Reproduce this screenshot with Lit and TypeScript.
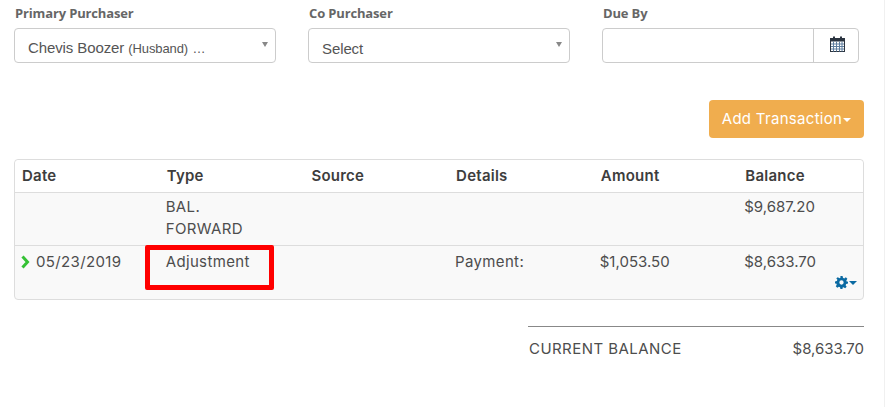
import { LitElement, html, css, svg } from "lit";
import { customElement } from "lit/decorators.js";

const gear = svg`<svg class="gear" width="13" height="13" viewBox="0 0 24 24"><path fill="#0b6aa2" fill-rule="evenodd" d="M10 0h4l.7 3.4 2.300 1 3-1.900 2.800 2.800-1.900 3 1 2.300L24 10v4l-3.400.7-1 2.300 1.900 3-2.800 2.800-3-1.900-2 .9L14 24h-4l-.7-3.200-2.100-.9-3 1.900-2.800-2.800 1.900-3-1-2.300L0 14v-4l3.400-.7 1-2.300-2-3L5.200 2.200l3 1.900 1.900-.8zM12 8a4 4 0 1 0 0 8 4 4 0 0 0 0-8z"/></svg>`;

const calendar = svg`<svg width="15" height="16" viewBox="0 0 15 16"><rect x="0.500" y="2.500" width="14" height="13" fill="#fff" stroke="#2b3440"/><rect x="0" y="2" width="15" height="3.500" fill="#2b3440"/><path d="M3 0.500h2v3h-2zM10 0.500h2v3h-2z" fill="#2b3440"/><path d="M3.500 5.500v10M6.500 5.500v10M9.500 5.500v10M12 5.500v10M1 8h13M1 10.500h13M1 13h13" stroke="#5f7f9f" stroke-width="1" fill="none"/></svg>`;

@customElement("app-root")
export class AppRoot extends LitElement {
  static styles = css`
    :host { display: block; position: relative; width: 888px; height: 407px; background: #fff; overflow: hidden;
      font-family: "Inter", "Open Sans", sans-serif; color: #4a4a4a; }
    .page { width: 885px; height: 407px; box-sizing: border-box; border-right: 1px solid #f0f0f0; padding: 4px 0 0 14px; }
    .fields { display: flex; gap: 32px; }
    .field { width: 262px; }
    .field.due { width: 257px; }
    .label { font: 700 13px/18px "Open Sans", sans-serif; color: #666; padding-left: 1px; height: 24px; letter-spacing: -0.15px; }
    .select { height: 35px; box-sizing: border-box; border: 1px solid #ccc; border-radius: 4px; background: #fff; display: flex; align-items: center; padding: 6px 14px 0 13px; position: relative;
      font: 15px/20px "Liberation Sans", Arial, sans-serif; letter-spacing: -0.1px; color: #555; }
    .select small { font-size: 13px; margin-left: 4px; word-spacing: 1px; letter-spacing: -0.1px; }
    .caret { position: absolute; right: 7px; top: 13px; width: 0; height: 0; border-left: 3.500px solid transparent; border-right: 3.500px solid transparent; border-top: 5px solid #888; }
    .group { display: flex; height: 35px; box-sizing: border-box; border: 1px solid #ccc; border-radius: 4px; }
    .group .input { flex: 1; border-right: 1px solid #ccc; }
    .group .addon { width: 44px; display: flex; align-items: center; justify-content: center; padding: 0 0 3px 3px; box-sizing: border-box; }
    .actions { display: flex; justify-content: flex-end; width: 850px; margin-top: 37px; }
    .btn { width: 155px; height: 38px; background: #f0ad4e; border-radius: 4px; color: #fff; box-sizing: border-box; display: flex; align-items: center; justify-content: center; gap: 1px;
      font: 15px/20px "Inter", sans-serif; letter-spacing: 0.3px; }
    .btn i { width: 0; height: 0; border-left: 4px solid transparent; border-right: 4px solid transparent; border-top: 4px solid #fff; margin-top: 2px; }
    .table { width: 850px; box-sizing: border-box; margin-top: 21px; border: 1px solid #ddd; border-radius: 4px; height: 141px; background: #f9f9f9; position: relative; }
    .row { display: grid; grid-template-columns: 144.700px 144.700px 144.700px 144.700px 144.500px 1fr; font: 15px/22px "Inter", sans-serif; letter-spacing: 0.35px; color: #4d4d4d; }
    .row > div { padding-left: 7px; }
    .row > .num { letter-spacing: 0; }
    .head { background: #fff; height: 32px; border-bottom: 1px solid #ddd; border-radius: 4px 4px 0 0; font-weight: 600; color: #3d3d3d; line-height: 31px; letter-spacing: 0.25px; }
    .r1 { height: 52px; border-bottom: 1px solid #ddd; }
    .r1 > div { padding: 3px 0 0 6px; }
    .r2 { height: 53px; position: relative; }
    .r2 > div { padding: 5px 0 0 6px; }
    .r2 .date { display: flex; align-items: flex-start; gap: 6px; padding-left: 5px; }
    .date svg { margin-top: 4px; flex: none; }
    .r2 .menu { position: absolute; right: 6px; bottom: 10px; display: flex; align-items: center; gap: 1px; padding: 0; }
    .menu i { width: 0; height: 0; border-left: 4px solid transparent; border-right: 4px solid transparent; border-top: 4px solid #0b6aa2; }
    .mark { position: absolute; left: 145px; top: 245px; width: 129px; height: 45px; box-sizing: border-box; border: 5px solid #f00; border-radius: 2px; }
    .total { width: 336px; margin: 26px 0 0 514px; box-sizing: border-box; border-top: 1px solid #888; display: flex; justify-content: space-between; padding: 12px 0 0 1px; font: 15px/20px "Inter", sans-serif; letter-spacing: 0.45px; color: #4d4d4d; }
    .total .num { letter-spacing: -0.05px; }
  `;

  render() {
    return html`
      <div class="page">
        <div class="fields">
          <div class="field">
            <div class="label">Primary Purchaser</div>
            <div class="select"><span>Chevis Boozer<small>(Husband) …</small></span><span class="caret"></span></div>
          </div>
          <div class="field">
            <div class="label">Co Purchaser</div>
            <div class="select"><span>Select</span><span class="caret"></span></div>
          </div>
          <div class="field due">
            <div class="label">Due By</div>
            <div class="group"><div class="input"></div><div class="addon">${calendar}</div></div>
          </div>
        </div>
        <div class="actions"><div class="btn">Add Transaction<i></i></div></div>
        <div class="table">
          <div class="row head"><div>Date</div><div>Type</div><div>Source</div><div>Details</div><div>Amount</div><div>Balance</div></div>
          <div class="row r1"><div></div><div>BAL.<br />FORWARD</div><div></div><div></div><div></div><div class="num">$9,687.20</div></div>
          <div class="row r2">
            <div class="date"><svg width="10" height="14" viewBox="0 0 10 14"><path d="M2.500 1.500l5 5.500-5 5.500" fill="none" stroke="#35c135" stroke-width="3"/></svg>05/23/2019</div>
            <div>Adjustment</div><div></div><div>Payment:</div><div class="num">$1,053.50</div><div class="num">$8,633.70</div>
            <div class="menu">${gear}<i></i></div>
          </div>
        </div>
        <div class="total"><span>CURRENT BALANCE</span><span class="num">$8,633.70</span></div>
      </div>
      <div class="mark"></div>
    `;
  }
}
